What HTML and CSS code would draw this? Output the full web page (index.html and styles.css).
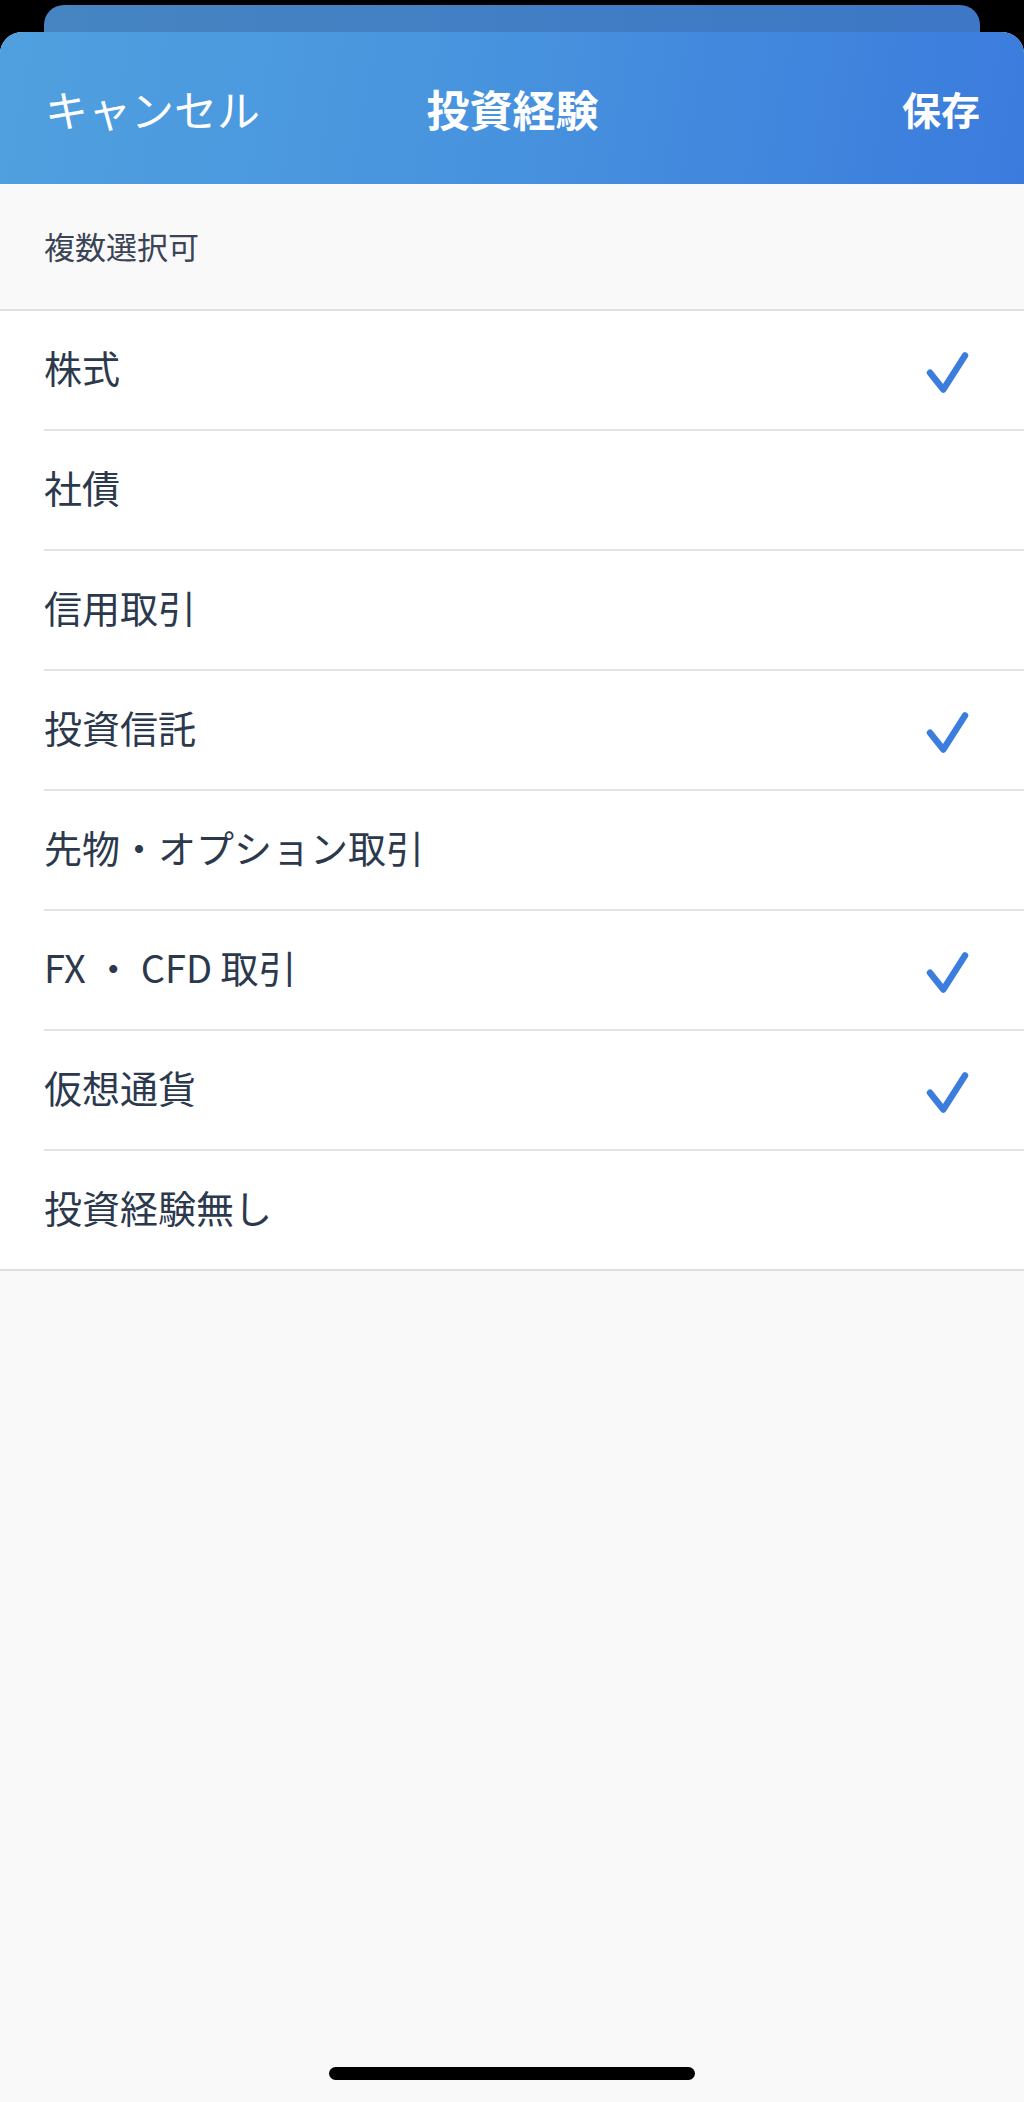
FILE: index.html
```html
<!DOCTYPE html>
<html lang="ja">
<head>
<meta charset="utf-8">
<link rel="stylesheet" href="styles.css">
</head>
<body>
<div class="backdrop">
  <div class="back-card"></div>
</div>
<div class="sheet">
  <header class="nav">
    <span class="nav-left">キャンセル</span>
    <span class="nav-title">投資経験</span>
    <span class="nav-right">保存</span>
  </header>
  <div class="section-head">複数選択可</div>
  <ul class="list">
    <li class="row"><div class="row-inner"><span class="label">株式</span><svg class="check" viewBox="0 0 48 48"><path d="M8 26.7 L21.3 43.5 L43 9.5"/></svg></div></li>
    <li class="row"><div class="row-inner"><span class="label">社債</span></div></li>
    <li class="row"><div class="row-inner"><span class="label">信用取引</span></div></li>
    <li class="row"><div class="row-inner"><span class="label">投資信託</span><svg class="check" viewBox="0 0 48 48"><path d="M8 26.7 L21.3 43.5 L43 9.5"/></svg></div></li>
    <li class="row"><div class="row-inner"><span class="label">先物・オプション取引</span></div></li>
    <li class="row"><div class="row-inner"><span class="label">FX ・ CFD 取引</span><svg class="check" viewBox="0 0 48 48"><path d="M8 26.7 L21.3 43.5 L43 9.5"/></svg></div></li>
    <li class="row"><div class="row-inner"><span class="label">仮想通貨</span><svg class="check" viewBox="0 0 48 48"><path d="M8 26.7 L21.3 43.5 L43 9.5"/></svg></div></li>
    <li class="row"><div class="row-inner"><span class="label">投資経験無し</span></div></li>
  </ul>
  <div class="home-indicator"></div>
</div>
</body>
</html>
```

FILE: styles.css
```css
html, body {
  margin: 0;
  padding: 0;
  background: #000;
  font-family: "Noto Sans CJK JP", "Noto Sans", sans-serif;
}
.backdrop {
  height: 32px;
  padding: 5px 44px 0;
  box-sizing: border-box;
}
.back-card {
  height: 27px;
  border-radius: 20px 20px 0 0;
  background: linear-gradient(90deg, #4685c2 0%, #3d77c6 100%);
}
.sheet {
  height: 2070px;
  background: #f9f9f9;
  border-radius: 22px 22px 0 0;
  overflow: hidden;
  display: flex;
  flex-direction: column;
}
.nav {
  height: 152px;
  flex: none;
  display: grid;
  grid-template-columns: 1fr auto 1fr;
  align-items: center;
  padding: 0 44px 0 45px;
  background: linear-gradient(100deg, #50a0df 0%, #4894de 45%, #3b7bdd 100%);
  color: #fff;
  font-size: 43px;
}
.nav-left { font-weight: 400; justify-self: start; }
.nav-title { font-weight: 700; justify-self: center; }
.nav-right { font-weight: 700; justify-self: end; font-size: 39px; }
.section-head {
  height: 126px;
  display: flex;
  align-items: center;
  padding-left: 44px;
  padding-bottom: 2px;
  box-sizing: border-box;
  font-size: 31px;
  color: #3a4456;
  border-bottom: 2px solid #e0e0e0;
  height: 127px;
}
.list {
  list-style: none;
  margin: 0;
  padding: 0;
  background: #fff;
  border-bottom: 2px solid #e0e0e0;
}
.row {
  padding-left: 44px;
}
.row-inner {
  height: 118px;
  display: flex;
  align-items: center;
  justify-content: space-between;
  padding-right: 54px;
  border-bottom: 2px solid #e3e3e3;
  font-size: 38px;
  color: #2c394d;
}
.label {
  padding-bottom: 7px;
}
.row:last-child .row-inner {
  border-bottom: none;
  height: 118px;
}
.check {
  width: 48px;
  height: 48px;
  fill: none;
  stroke: #3b7ddd;
  stroke-width: 6.5;
  stroke-linecap: round;
  stroke-linejoin: round;
}
.home-indicator {
  margin: auto auto 22px;
  width: 366px;
  height: 13px;
  border-radius: 7px;
  background: #000;
}
```
